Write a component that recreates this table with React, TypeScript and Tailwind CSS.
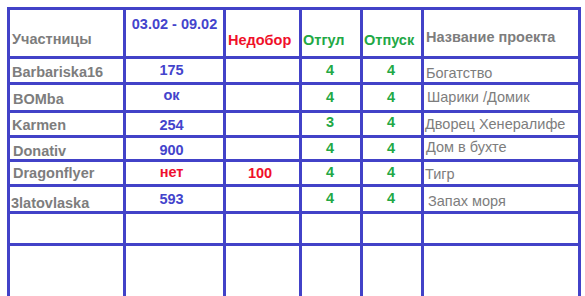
import React from 'react';

type Row = {
  name: string;
  nameCls: string;
  value: string;
  valueCls: string;
  shortfall: string;
  shortfallCls: string;
  dayOff: string;
  dayOffCls: string;
  vacation: string;
  vacationCls: string;
  project: string;
  projectCls: string;
};

const rows: Row[] = [
  {
    name: 'Barbariska16', nameCls: 'pt-[5px] pl-[2px]',
    value: '175', valueCls: 'pt-[3px] text-[#4444cc]',
    shortfall: '', shortfallCls: '',
    dayOff: '4', dayOffCls: 'pt-[3px]',
    vacation: '4', vacationCls: 'pt-[3px]',
    project: 'Богатство', projectCls: 'pt-[6px] pl-[2px]',
  },
  {
    name: 'BOMba', nameCls: 'pt-[6px] pl-[3px]',
    value: 'ок', valueCls: 'pt-[2px] text-[#4444cc]',
    shortfall: '', shortfallCls: '',
    dayOff: '4', dayOffCls: 'pt-[4px]',
    vacation: '4', vacationCls: 'pt-[4px]',
    project: 'Шарики /Домик', projectCls: 'pt-[4px] pl-[3px]',
  },
  {
    name: 'Karmen', nameCls: 'pt-[4px] pl-[2px]',
    value: '254', valueCls: 'pt-[4px] text-[#4444cc]',
    shortfall: '', shortfallCls: '',
    dayOff: '3', dayOffCls: 'pt-[1px]',
    vacation: '4', vacationCls: 'pt-[1px]',
    project: 'Дворец Хенералифе', projectCls: 'pt-[3px] pl-[1px]',
  },
  {
    name: 'Donativ', nameCls: 'pt-[5px] pl-[3px]',
    value: '900', valueCls: 'pt-[4px] text-[#4444cc]',
    shortfall: '', shortfallCls: '',
    dayOff: '4', dayOffCls: 'pt-[2px]',
    vacation: '4', vacationCls: 'pt-[2px]',
    project: 'Дом в бухте', projectCls: 'pt-[1px] pl-[2px]',
  },
  {
    name: 'Dragonflyer', nameCls: 'pt-[3px] pl-[3px]',
    value: 'нет', valueCls: 'pt-[2px] text-[#ee1030]',
    shortfall: '100', shortfallCls: 'pt-[3px]',
    dayOff: '4', dayOffCls: 'pt-[2px]',
    vacation: '4', vacationCls: 'pt-[2px]',
    project: 'Тигр', projectCls: 'pt-[4px] pl-[1px]',
  },
  {
    name: '3latovlaska', nameCls: 'pt-[8px] pl-[1px]',
    value: '593', valueCls: 'pt-[4px] text-[#4444cc]',
    shortfall: '', shortfallCls: '',
    dayOff: '4', dayOffCls: 'pt-[3px]',
    vacation: '4', vacationCls: 'pt-[3px]',
    project: 'Запах моря', projectCls: 'pt-[6px] pl-[4px]',
  },
];

const Cell: React.FC<{ className?: string; children?: React.ReactNode }> = ({ className = '', children }) => (
  <div className={`bg-white leading-4 whitespace-nowrap ${className}`}>{children}</div>
);

export default function App() {
  return (
    <div className="h-[296px] w-[585px] overflow-hidden bg-white font-['Liberation_Sans',Arial,sans-serif] text-[14.5px]">
      <div className="ml-[7px] mt-[7px] grid w-[574px] grid-cols-[113px_97px_73px_58px_58px_154px] grid-rows-[46px_23px_25px_22px_21px_22px_24px_29px_60px] gap-[3px] bg-[#4242c8] p-[3px]">
        <Cell className="pt-[21px] pl-[2px] font-bold text-[#7d7d7d]">Участницы</Cell>
        <Cell className="pt-[6px] text-center font-bold text-[#4444cc]">03.02 - 09.02</Cell>
        <Cell className="pt-[22px] pl-[2px] font-bold text-[#f0102a]">Недобор</Cell>
        <Cell className="pt-[22px] pl-[1px] font-bold text-[#22a845]">Отгул</Cell>
        <Cell className="pt-[22px] pl-[1px] font-bold text-[#22a845]">Отпуск</Cell>
        <Cell className="pt-[19px] pl-[2px] font-bold text-[#7d7d7d]">Название проекта</Cell>

        {rows.map((r) => (
          <React.Fragment key={r.name}>
            <Cell className={`font-bold text-[#7d7d7d] ${r.nameCls}`}>{r.name}</Cell>
            <Cell className={`pr-[6px] text-center font-bold ${r.valueCls}`}>{r.value}</Cell>
            <Cell className={`pr-[5px] text-center font-bold text-[#f0102a] ${r.shortfallCls}`}>{r.shortfall}</Cell>
            <Cell className={`pr-[2px] text-center font-bold text-[#22a845] ${r.dayOffCls}`}>{r.dayOff}</Cell>
            <Cell className={`pr-[2px] text-center font-bold text-[#22a845] ${r.vacationCls}`}>{r.vacation}</Cell>
            <Cell className={`text-[#7d7d7d] ${r.projectCls}`}>{r.project}</Cell>
          </React.Fragment>
        ))}

        {[0, 1].map((i) =>
          [0, 1, 2, 3, 4, 5].map((j) => <Cell key={`e${i}-${j}`} />)
        )}
      </div>
    </div>
  );
}
